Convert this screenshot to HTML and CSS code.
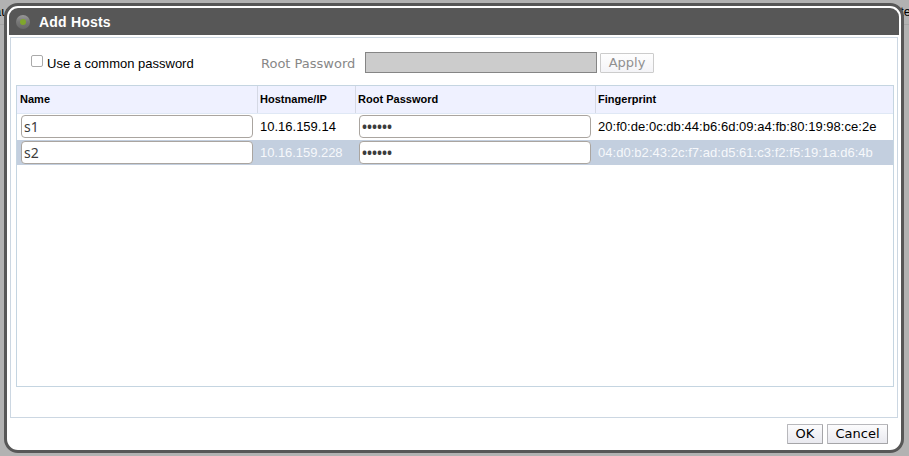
FILE: index.html
```
<!DOCTYPE html>
<html lang="en">
<head>
<meta charset="utf-8">
<title>Add Hosts</title>
<link rel="stylesheet" href="styles.css">
</head>
<body>
<div class="backdrop"><span>au</span><span>te</span></div>
<main class="dialog">
  <header class="titlebar">
    <svg class="logo" width="14" height="14" viewBox="0 0 14 14">
      <defs><linearGradient id="ring" x1="0" y1="0" x2="0" y2="1"><stop offset="0" stop-color="#999"/><stop offset=".5" stop-color="#777"/><stop offset="1" stop-color="#686868"/></linearGradient></defs>
      <circle cx="7" cy="7" r="7" fill="url(#ring)"/>
      <circle cx="7" cy="7" r="3" fill="#80a62c"/>
    </svg>
    <h1>Add Hosts</h1>
  </header>
  <section class="panel">
    <div class="common">
      <label class="check"><input type="checkbox"><span>Use a common password</span></label>
      <span class="root-label">Root Password</span>
      <input class="root-input" type="text" disabled>
      <button class="btn apply" disabled>Apply</button>
    </div>
    <div class="grid">
      <div class="row head"><div>Name</div><div>Hostname/IP</div><div>Root Password</div><div>Fingerprint</div></div>
      <div class="row"><div><input class="field" value="s1"></div><div>10.16.159.14</div><div><input class="field dots" value="••••••"></div><div class="print">20:f0:de:0c:db:44:b6:6d:09:a4:fb:80:19:98:ce:2e</div></div>
      <div class="row selected"><div><input class="field" value="s2"></div><div class="ip">10.16.159.228</div><div><input class="field dots" value="••••••"></div><div class="print">04:d0:b2:43:2c:f7:ad:d5:61:c3:f2:f5:19:1a:d6:4b</div></div>
    </div>
  </section>
  <footer class="actions"><button class="btn ok">OK</button><button class="btn cancel">Cancel</button></footer>
</main>
</body>
</html>
```
FILE: styles.css
```
* { box-sizing: border-box; }
body {
  margin: 0;
  width: 909px;
  height: 456px;
  overflow: hidden;
  background: #b2b2b2;
  font: 13px "Liberation Sans", Arial, sans-serif;
  color: #000;
  padding: 3px 5px 3px 4px;
}
.backdrop {
  position: absolute;
  inset: 0 0 auto 0;
  height: 25px;
  padding-top: 4px;
  border-bottom: 1px solid #a5a5a5;
  display: flex;
  justify-content: space-between;
  line-height: 15px;
}
.backdrop span:first-child { margin-left: -6px; }
.backdrop span:last-child { margin-right: -2px; }
.dialog {
  position: relative;
  width: 900px;
  height: 450px;
  border: 3px solid #575757;
  border-radius: 14px;
  background: #fff;
  padding: 2px;
  overflow: hidden;
}
.titlebar {
  height: 27px;
  background: #575757;
  border-radius: 9px 9px 0 0;
  display: flex;
  align-items: center;
  padding-left: 7px;
}
.titlebar h1 {
  margin: 0 0 0 9px;
  font-size: 14px;
  line-height: 16px;
  letter-spacing: .2px;
  color: #fff;
}
.panel {
  height: 381px;
  margin: 2px 1px 0;
  border: 1px solid #ccd7e2;
  padding: 14px 3px 0 5px;
}
.common {
  height: 33px;
  display: flex;
  align-items: flex-start;
  font: 13px "DejaVu Sans", sans-serif;
}
.check {
  width: 245px;
  display: flex;
  font: 13px "Liberation Sans", sans-serif;
}
.check input {
  appearance: none;
  width: 12px;
  height: 12px;
  margin: 3px 4px 0 15px;
  border: 1px solid #aaa;
  border-radius: 2px;
  background: #fff;
}
.check span { line-height: 15px; margin-top: 4px; }
.root-label {
  width: 104px;
  line-height: 16px;
  margin-top: 4px;
  color: #878787;
}
.root-input {
  width: 232px;
  height: 21px;
  border: 1px solid #858585;
  background: #ccc;
  padding: 0;
}
.btn {
  height: 20px;
  padding: 0;
  border: 1px solid #b8b8bc;
  border-right-color: #a5a5a8;
  border-bottom-color: #a5a5a8;
  border-radius: 1px;
  background: linear-gradient(#fcfcfd, #e9e9ef);
  font: 13px/16px "DejaVu Sans", sans-serif;
  color: #000;
}
.apply {
  width: 54px;
  margin: 1px 0 0 3px;
  color: #909090;
  border-color: #ccc;
  background: linear-gradient(#fefefe, #f4f4f7);
}
.grid {
  width: 878px;
  height: 302px;
  border: 1px solid #c5d5e1;
}
.row {
  display: grid;
  grid-template-columns: 240px 98px 240px 298px;
  height: 26px;
  line-height: 25px;
}
.row > div { padding-left: 3px; white-space: nowrap; }
.head {
  height: 28px;
  line-height: 26px;
  background: #eff1ff;
  border-bottom: 1px solid #dfe8f5;
  font-size: 11px;
  font-weight: bold;
}
.head > div + div { box-shadow: inset 1px 0 #d5d9e5; }
.head > div { letter-spacing: .02px; }
.print { letter-spacing: .035px; }
.ip { letter-spacing: -.05px; }
.selected {
  height: 25px;
  color: #f6f8fb;
  background: #c3cfdf;
}
.field {
  display: block;
  width: 232px;
  height: 23px;
  margin: 1px 0 0 1px;
  border: 1px solid #aaa5a0;
  border-radius: 4px;
  background: #fff;
  padding: 0 2px;
  font: 14px "Noto Sans", sans-serif;
  color: #3c3c3c;
}
.dots { font-size: 13.333px; font-weight: bold; }
.actions {
  display: flex;
  justify-content: flex-end;
  gap: 4px;
  padding: 6px 11px 0 0;
}
.ok { width: 36px; }
.cancel { width: 61px; }
```
